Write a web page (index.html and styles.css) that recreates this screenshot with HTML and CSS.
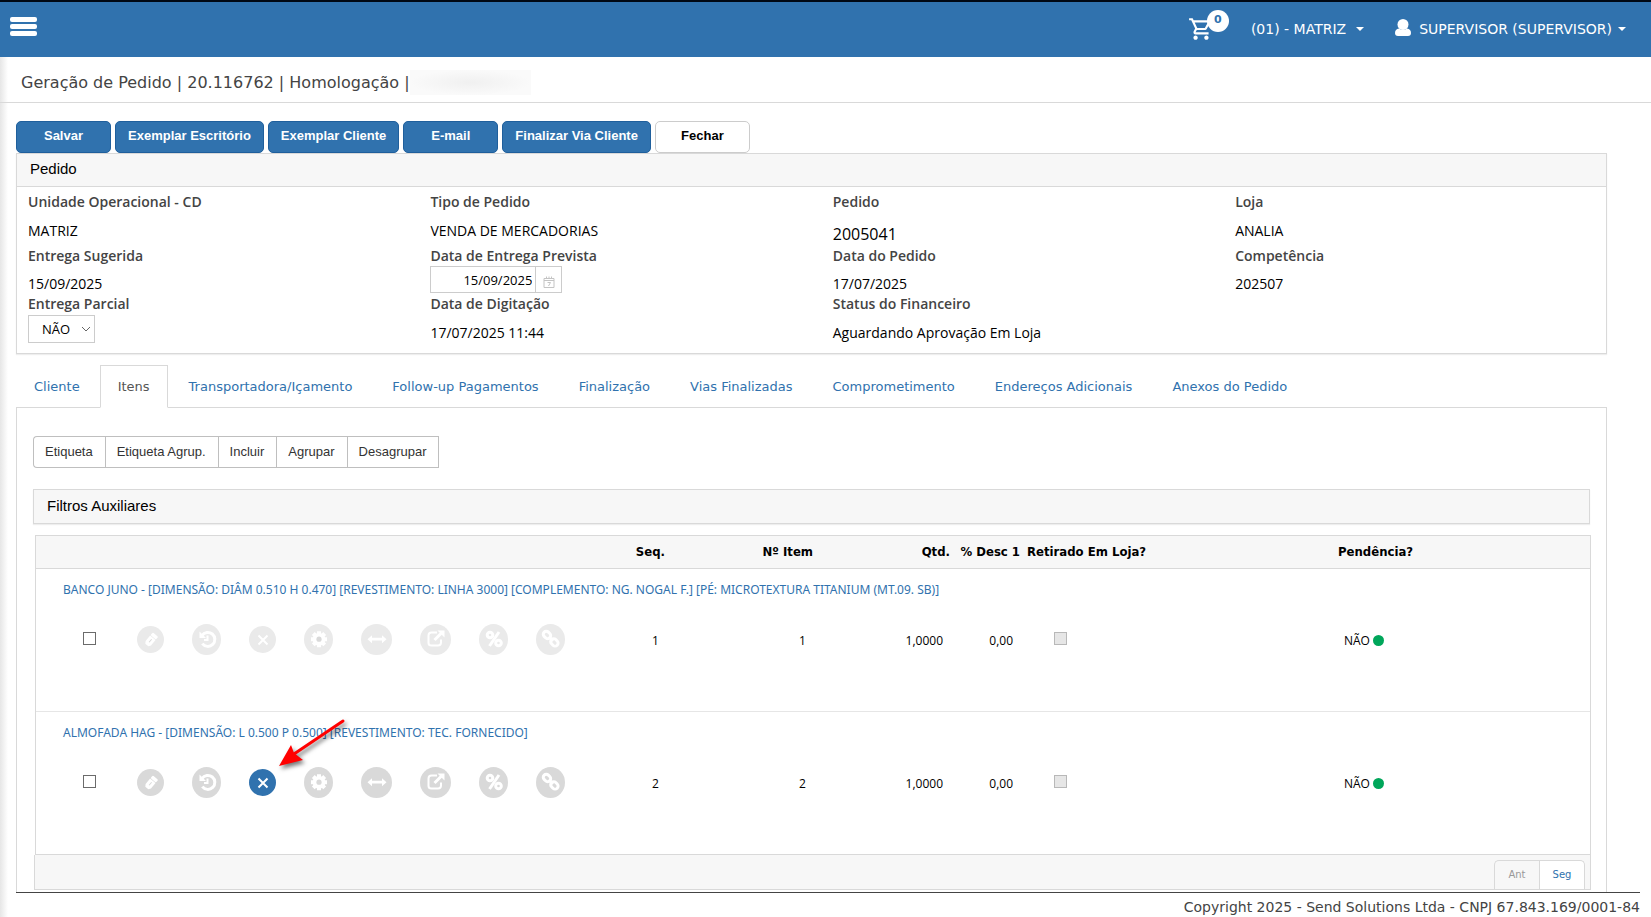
FILE: index.html
```html
<!DOCTYPE html>
<html lang="pt-BR">
<head>
<meta charset="utf-8">
<title>Geração de Pedido</title>
<link rel="stylesheet" href="styles.css">
</head>
<body>
<svg class="sprite" aria-hidden="true">
  <symbol id="i-edit" viewBox="0 0 28 28"><g transform="rotate(40 14 14)"><rect x="10.500" y="7" width="7" height="3.500" rx="1"/><path d="M10.500 11.200h7v7l-1.500 2.300h-4L10.500 18.200z"/><path class="cut" d="M14 13v4"/></g></symbol>
  <symbol id="i-history" viewBox="0 0 28 28"><path class="ln" d="M9 9.500A7 7 0 1 1 9.300 17.700"/><path class="ln thin" d="M14.500 9.500v4.500H11"/><path d="M6.500 5.500v6.500H13z"/></symbol>
  <symbol id="i-x" viewBox="0 0 28 28"><path class="ln thin" d="M9.500 9.500l9 9M18.500 9.500l-9 9"/></symbol>
  <symbol id="i-gear" viewBox="0 0 28 28"><path class="teeth" d="M14 5.200v16M6 13.200h16M8.300 7.500l11.400 11.400M19.700 7.500L8.300 18.900"/><circle cx="14" cy="13.200" r="6.300"/><circle class="hole" cx="14" cy="13.200" r="2.600"/></symbol>
  <symbol id="i-arrows" viewBox="0 0 28 28"><path d="M4.500 13.200l4.500-4v2.600h10V9.200l4.500 4-4.500 4v-2.600H9v2.600z"/></symbol>
  <symbol id="i-external" viewBox="0 0 28 28"><path class="ln thin" d="M15 6.500H9.500Q6.500 6.500 6.500 9.500v7.500Q6.500 19.500 9.500 19.500H16q3 0 3-3v-3"/><path class="ln" d="M12.500 14l7-7"/><path d="M15.500 4.500h7v7z"/></symbol>
  <symbol id="i-percent" viewBox="0 0 28 28"><path class="ln" d="M19 6L9.500 20"/><circle class="ln" cx="10" cy="9" r="2.800"/><circle class="ln" cx="18.500" cy="17" r="2.800"/></symbol>
  <symbol id="i-link" viewBox="0 0 28 28"><g transform="rotate(45 13.500 12.500)"><rect class="ln" x="4.500" y="9.500" width="8" height="6" rx="3"/><rect class="ln" x="15" y="9.500" width="8" height="6" rx="3"/><path class="ln" d="M11 12.500h6"/></g></symbol>
</svg>

<header class="topbar">
  <button class="menu" type="button" aria-label="Menu"><span></span><span></span><span></span></button>
  <nav class="top-actions">
    <button class="cart" type="button" aria-label="Carrinho">
      <svg viewBox="0 0 24 24" width="26" height="26"><path d="M15.550 13c.75 0 1.410-.41 1.750-1.030l3.580-6.490A.996.996 0 0 0 20.010 4H5.210l-.94-2H1v2h2l3.600 7.590-1.350 2.440C4.520 15.370 5.480 17 7 17h12v-2H7l1.100-2h7.450zM6.160 6h12.150l-2.760 5H8.530L6.160 6zM7 18c-1.100 0-2 .9-2 2s.9 2 2 2 2-.9 2-2-.9-2-2-2zm10 0c-1.100 0-2 .9-2 2s.9 2 2 2 2-.9 2-2-.9-2-2-2z"/></svg>
      <span class="badge">0</span>
    </button>
    <button class="drop branch" type="button">(01) - MATRIZ<span class="caret"></span></button>
    <button class="drop user" type="button">
      <svg viewBox="0 0 16 17" width="16" height="17"><circle cx="8" cy="5.500" r="5.500"/><path d="M0 14q0-4 4-4.500 4 3 8 0 4 .5 4 4.500 0 3-3 3H3q-3 0-3-3z"/></svg>
      SUPERVISOR (SUPERVISOR)<span class="caret"></span></button>
  </nav>
</header>

<div class="shell">
  <div class="titlebar"><h1>Geração de Pedido | 20.116762 | Homologação |</h1><span class="redacted"></span></div>

  <main>
    <div class="toolbar">
      <button type="button" class="btn">Salvar</button>
      <button type="button" class="btn">Exemplar Escritório</button>
      <button type="button" class="btn">Exemplar Cliente</button>
      <button type="button" class="btn">E-mail</button>
      <button type="button" class="btn">Finalizar Via Cliente</button>
      <button type="button" class="btn light">Fechar</button>
    </div>

    <section class="panel">
      <h2>Pedido</h2>
      <div class="fields">
        <div class="field r1"><b>Unidade Operacional - CD</b><span>MATRIZ</span></div>
        <div class="field r1"><b>Tipo de Pedido</b><span>VENDA DE MERCADORIAS</span></div>
        <div class="field r1"><b>Pedido</b><span class="number">2005041</span></div>
        <div class="field r1"><b>Loja</b><span>ANALIA</span></div>
        <div class="field"><b>Entrega Sugerida</b><span>15/09/2025</span></div>
        <div class="field"><label for="prevista">Data de Entrega Prevista</label>
          <div class="date"><input id="prevista" type="text" value="15/09/2025"><button type="button" aria-label="Calendário"><svg viewBox="0 0 12 12" width="12" height="12"><path d="M1 2.500h10v9H1zM1 4.500h10M3.500.5v2M6 .5v2M8.500.5v2M4.500 6.500h3l-2 3.500"/></svg></button></div></div>
        <div class="field"><b>Data do Pedido</b><span>17/07/2025</span></div>
        <div class="field"><b>Competência</b><span>202507</span></div>
        <div class="field"><label for="parcial">Entrega Parcial</label>
          <div class="select"><select id="parcial"><option>NÃO</option><option>SIM</option></select><svg viewBox="0 0 10 6" width="10" height="6"><path d="M1 1l4 4 4-4"/></svg></div></div>
        <div class="field last"><b>Data de Digitação</b><span>17/07/2025 11:44</span></div>
        <div class="field last"><b>Status do Financeiro</b><span>Aguardando Aprovação Em Loja</span></div>
      </div>
    </section>

    <nav class="tabs">
      <a href="#">Cliente</a>
      <a href="#" class="active">Itens</a>
      <a href="#">Transportadora/Içamento</a>
      <a href="#">Follow-up Pagamentos</a>
      <a href="#">Finalização</a>
      <a href="#">Vias Finalizadas</a>
      <a href="#">Comprometimento</a>
      <a href="#">Endereços Adicionais</a>
      <a href="#">Anexos do Pedido</a>
    </nav>

    <section class="content">
      <div class="group">
        <button type="button">Etiqueta</button><button type="button">Etiqueta Agrup.</button><button type="button">Incluir</button><button type="button">Agrupar</button><button type="button">Desagrupar</button>
      </div>
      <h2 class="filters">Filtros Auxiliares</h2>

      <div class="grid">
        <table>
          <colgroup><col class="c-check"><col class="c-act"><col class="c-seq"><col class="c-item"><col class="c-qtd"><col class="c-desc"><col class="c-ret"><col></colgroup>
          <thead><tr><th></th><th></th><th class="num">Seq.</th><th class="num">Nº Item</th><th class="num">Qtd.</th><th class="num">% Desc 1</th><th class="ret">Retirado Em Loja?</th><th class="pend">Pendência?</th></tr></thead>
          <tbody class="faded">
            <tr class="desc"><td colspan="8"><a href="#">BANCO JUNO - [DIMENSÃO: DIÂM 0.510 H 0.470] [REVESTIMENTO: LINHA 3000] [COMPLEMENTO: NG. NOGAL F.] [PÉ: MICROTEXTURA TITANIUM (MT.09. SB)]</a></td></tr>
            <tr class="data">
              <td class="sel"><input type="checkbox" aria-label="Selecionar item 1"></td>
              <td><div class="acts">
                <button type="button" class="small" aria-label="Editar"><svg><use href="#i-edit"/></svg></button>
                <button type="button" aria-label="Histórico"><svg><use href="#i-history"/></svg></button>
                <button type="button" class="small" aria-label="Excluir"><svg><use href="#i-x"/></svg></button>
                <button type="button" aria-label="Configurar"><svg><use href="#i-gear"/></svg></button>
                <button type="button" class="wide" aria-label="Dimensões"><svg><use href="#i-arrows"/></svg></button>
                <button type="button" class="wide" aria-label="Abrir"><svg><use href="#i-external"/></svg></button>
                <button type="button" aria-label="Desconto"><svg><use href="#i-percent"/></svg></button>
                <button type="button" aria-label="Vincular"><svg><use href="#i-link"/></svg></button>
              </div></td>
              <td class="seq">1</td><td class="item">1</td><td class="num qtd">1,0000</td><td class="num dsc">0,00</td>
              <td class="chk"><input type="checkbox" disabled aria-label="Retirado em loja"></td>
              <td class="pend-v"><div>NÃO<i class="dot"></i></div></td>
            </tr>
          </tbody>
          <tbody>
            <tr class="desc"><td colspan="8"><a href="#">ALMOFADA HAG - [DIMENSÃO: L 0.500 P 0.500] [REVESTIMENTO: TEC. FORNECIDO]</a></td></tr>
            <tr class="data">
              <td class="sel"><input type="checkbox" aria-label="Selecionar item 2"></td>
              <td><div class="acts">
                <button type="button" class="small" aria-label="Editar"><svg><use href="#i-edit"/></svg></button>
                <button type="button" aria-label="Histórico"><svg><use href="#i-history"/></svg></button>
                <button type="button" class="small on" aria-label="Excluir"><svg><use href="#i-x"/></svg>
                  <svg class="pointer" viewBox="0 0 72 56"><path class="shaft" d="M65 3L16 36"/><path d="M1 48L13 27 16 35 25 42z"/></svg></button>
                <button type="button" aria-label="Configurar"><svg><use href="#i-gear"/></svg></button>
                <button type="button" class="wide" aria-label="Dimensões"><svg><use href="#i-arrows"/></svg></button>
                <button type="button" class="wide" aria-label="Abrir"><svg><use href="#i-external"/></svg></button>
                <button type="button" aria-label="Desconto"><svg><use href="#i-percent"/></svg></button>
                <button type="button" aria-label="Vincular"><svg><use href="#i-link"/></svg></button>
              </div></td>
              <td class="seq">2</td><td class="item">2</td><td class="num qtd">1,0000</td><td class="num dsc">0,00</td>
              <td class="chk"><input type="checkbox" disabled aria-label="Retirado em loja"></td>
              <td class="pend-v"><div>NÃO<i class="dot"></i></div></td>
            </tr>
          </tbody>
        </table>
      </div>
      <div class="pager"><button type="button" disabled>Ant</button><button type="button">Seg</button></div>
    </section>
  </main>
  <footer>Copyright 2025 - Send Solutions Ltda - CNPJ 67.843.169/0001-84</footer>
</div>
</body>
</html>
```
FILE: styles.css
```css
* { box-sizing: border-box; }
:root { --blue: #3072ae; --line: #d9d9d9; --head: #f7f7f7; }
body { margin: 0; background: #fff; color: #444; font: 13px/20px Verdana, "DejaVu Sans", sans-serif; }
button, input, select { font: inherit; color: inherit; margin: 0; }
a { color: var(--blue); text-decoration: none; }
h1, h2 { margin: 0; font-weight: normal; }
.sprite { display: none; }

.topbar { display: flex; justify-content: space-between; height: 57px; padding: 0 25px 0 10px; background: var(--blue); border-top: 2px solid #000814; color: #fff; }
.topbar button { background: none; border: 0; padding: 0; }
.topbar svg { fill: #fff; display: block; }
.topbar .menu { display: flex; flex-direction: column; gap: 2px; align-self: flex-start; padding-top: 15px; }
.menu span { width: 27px; height: 5px; border-radius: 2px; background: #fff; }
.top-actions { display: flex; align-items: center; padding-bottom: 1px; }
.cart { position: relative; width: 40px; margin-right: 23px; }
.badge { position: absolute; left: 19px; top: -6px; width: 22px; height: 22px; border-radius: 50%; background: #fff; color: var(--blue); font: bold 11px/20px "DejaVu Sans", sans-serif; }
.drop { display: flex; align-items: center; font-size: 14px; }
.branch { margin-right: 31px; }
.user svg { margin: 0 8px 4px 0; }
.caret { border: 4px solid transparent; border-top-color: #fff; border-bottom: 0; margin-left: 10px; }
.user .caret { margin-left: 6px; }

.shell { background: linear-gradient(90deg, #e6e6e6, #fff 8px) no-repeat; min-height: 860px; }
.titlebar { display: flex; align-items: center; height: 46px; padding: 6px 0 0 21px; border-bottom: 1px solid var(--line); }
h1 { font-size: 16px; }
.redacted { width: 121px; height: 25px; background: radial-gradient(closest-side, #f0f0f0, #fafafa); }

main { padding: 18px 44px 0 16px; }
.toolbar { display: flex; gap: 4px; }
.btn { min-width: 95px; height: 32px; padding: 0 12px 4px; border: 1px solid #1f5f9c; border-radius: 5px; background: var(--blue); color: #fff; font: bold 13px "Liberation Sans", Arial, sans-serif; }
.btn.light { background: #fff; color: #000; border-color: #ccc; }

.panel { border: 1px solid var(--line); box-shadow: 0 1px 1px #eee; }
h2 { height: 33px; padding: 0 13px; background: var(--head); border-bottom: 1px solid var(--line); color: #000; font: 15px/30px "Liberation Sans", Arial, sans-serif; }
.fields { display: grid; grid-template-columns: repeat(3, 25.5%) 1fr; grid-template-rows: 54px 48px 59px; padding: 5px 0 0 11px; font: 14px/20px "Trebuchet MS", "Open Sans", sans-serif; }
.field { display: flex; flex-direction: column; align-items: flex-start; }
.field b, .field label { font-weight: 600; color: #444; }
.field > span { color: #000; padding-top: 8px; }
.field.r1 > span, .field.last > span { padding-top: 9px; }
.field.r1 .number { font-size: 16px; padding-top: 12px; }
.date { display: flex; height: 27px; border: 1px solid #ccc; }
.date input { width: 105px; border: 0; border-right: 1px solid #ccc; padding: 0 3px; text-align: right; font-size: 13px; color: #000; }
.date button { display: flex; align-items: center; justify-content: center; width: 25px; border: 0; padding: 4px 0 0; background: #fff; }
.date svg { fill: none; stroke: #c4c4c4; }
.select { position: relative; margin-top: 1px; }
.select select { appearance: none; width: 67px; height: 28px; border: 1px solid #ccc; border-radius: 0; background: #fff; padding: 0 13px; font-size: 13px; color: #000; }
.select svg { position: absolute; right: 4px; top: 11px; fill: none; stroke: #666; }

.tabs { display: flex; gap: 2px; height: 43px; margin-top: 11px; border-bottom: 1px solid var(--line); }
.tabs a { padding: 11px 18px; border: 1px solid transparent; height: 43px; font-size: 13px; }
.tabs a.active { padding: 11px 17px; color: #555; border-color: var(--line); border-bottom-color: #fff; background: #fff; }
.tabs a:first-child { padding: 11px 17px; }

.content { border: solid var(--line); border-width: 0 1px; padding: 28px 16px 2px 16px; }
.group { display: flex; }
.group button { height: 32px; padding: 0 12px 2px 11px; border: 1px solid #bfbfbf; border-right-width: 0; background: #fff; color: #333; font: 13px "Liberation Sans", Arial, sans-serif; }
.group button:first-child { border-radius: 4px 0 0 4px; }
.group button:last-child { border-right-width: 1px; }
.filters { height: 35px; margin-top: 21px; border: 1px solid var(--line); line-height: 32px; box-shadow: 0 1px 1px #eee; }

.grid { margin: 11px -1px 0 2px; border: 1px solid var(--line); border-bottom: 0; }
table { width: 100%; table-layout: fixed; border-collapse: collapse; color: #000; font: 12px/20px "Trebuchet MS", "Open Sans", sans-serif; }
th, td { padding: 0; text-align: left; font-weight: normal; }
th { height: 32px; background: var(--head); border-bottom: 1px solid var(--line); font: bold 13px/20px "DejaVu Sans Condensed", "DejaVu Sans", sans-serif; white-space: nowrap; }
.num { text-align: right; }
.c-check { width: 101px; } .c-act { width: 439px; } .c-seq { width: 89px; } .c-item { width: 148px; }
.c-qtd { width: 137px; } .c-desc { width: 70px; } .c-ret { width: 240px; }
th.ret { padding-left: 7px; }
th.pend { padding-left: 78px; }
.desc td { height: 40px; padding: 3px 0 0 27px; font-family: "Trebuchet MS", "Noto Sans", sans-serif; }
.data td { height: 103px; padding-bottom: 39px; border-bottom: 1px solid #e6e6e6; }
.data .seq, .data .item, .data .num, .data .pend-v { padding-bottom: 37px; }
.data .sel, .data .chk { padding-bottom: 41px; }
tbody:last-child .data td { border-color: var(--line); }
td input { appearance: none; display: block; width: 13px; height: 13px; border: 1px solid #6b6b6b; background: #fff; }
td input:disabled { border-color: #b8b8b8; background: #e6e6e6; }
.sel input { margin-left: 47px; }
.seq { padding-left: 76px; } .item { padding-left: 134px; }
.data .qtd, .data .dsc { padding-right: 7px; }
.chk input { margin-left: 34px; }
.pend-v div { display: flex; align-items: center; gap: 3px; padding-left: 84px; }
.dot { width: 11px; height: 11px; border-radius: 50%; background: #00a65a; }
.acts { display: flex; align-items: center; gap: 28px; }
.acts button { position: relative; width: 29px; height: 31px; padding: 0; border: 0; border-radius: 50%; background: #d9d9d9; display: flex; align-items: center; justify-content: center; }
.acts .small { width: 27px; height: 27px; }
.acts .wide { width: 31px; }
.faded .acts button { background: #eaeaea; }
.acts .on { background: var(--blue); }
.acts svg { width: 28px; height: 28px; flex: none; fill: #fff; stroke-width: 0; }
.ln { fill: none; stroke: #fff; stroke-width: 3px; }
.thin { stroke-width: 2px; }
.cut { fill: none; stroke: #d9d9d9; stroke-width: 1px; }
.teeth { stroke: #fff; stroke-width: 4px; }
.hole { fill: #d9d9d9; }
.acts .pointer { position: absolute; left: 29px; top: -51px; width: 72px; height: 56px; fill: #f00; filter: drop-shadow(2px 3px 2px #0008); }
.shaft { stroke: #f00; stroke-width: 3px; stroke-linecap: round; }

.pager { display: flex; justify-content: flex-end; height: 35px; margin: 0 -1px 0 1px; padding: 5px 5px 0; background: var(--head); border: 1px solid var(--line); border-top: 0; }
.pager button { width: 46px; height: 29px; border: 1px solid var(--line); border-bottom: 0; border-radius: 0 5px 0 0; background: #fff; color: var(--blue); font-size: 10px; }
.pager button:disabled { width: 45px; background: var(--head); color: #999; border-right: 0; border-radius: 5px 0 0 0; }
footer { margin: 0 11px 0 16px; padding-top: 4px; border-top: 1px solid #444; text-align: right; font-size: 14px; }
```
